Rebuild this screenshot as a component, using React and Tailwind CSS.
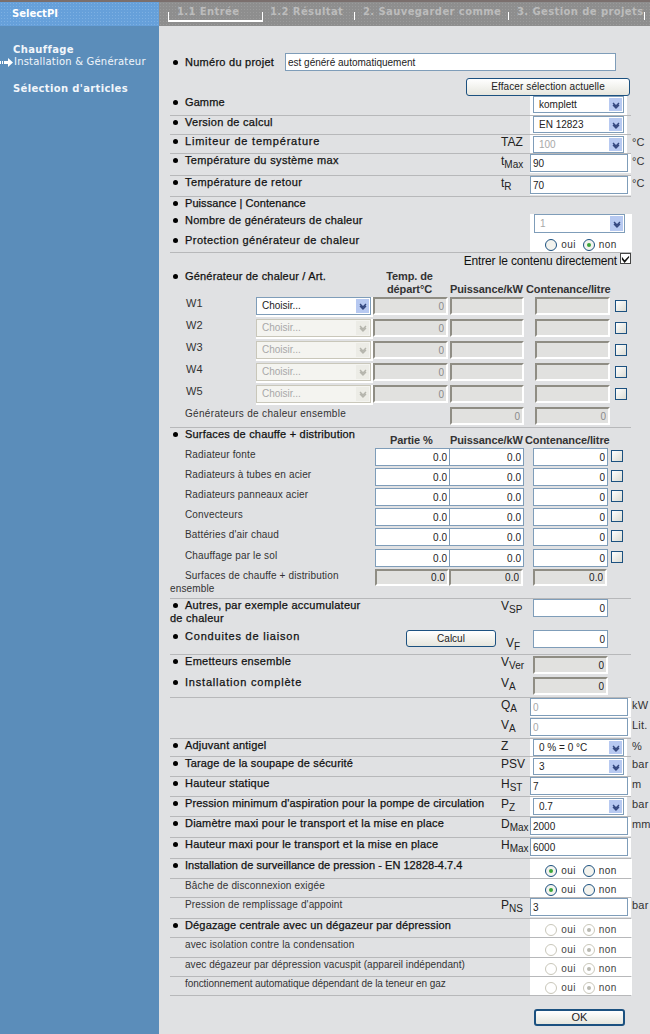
import React from "react";
import clsx from "clsx";

// shared input look
const boxBorder = "border border-[#7f9db9]";
const insetBorder = "border-2 border-t-[#8f8d84] border-l-[#8f8d84] border-r-white border-b-white bg-[#e1e1df]";

function Field({ value, className, right, off, inset, dark }) {
  return (
    <input
      defaultValue={value}
      disabled={off || inset}
      className={clsx(
        "block min-w-0 px-[2px] text-[10px] leading-none outline-none",
        right && "text-right",
        inset ? insetBorder : boxBorder + " bg-white",
        off ? "text-[#a9a9a9]" : inset && !dark ? "text-[#8b8b8b]" : "text-[#222]",
        className
      )}
    />
  );
}

function Chevron({ color }) {
  return (
    <svg viewBox="0 0 12 12" className="w-[12px] h-[12px]" fill="none">
      <path d="M3 4l3 3 3-3M3 6l3 3 3-3" stroke={color} strokeWidth="1.4" />
    </svg>
  );
}

function Select({ value, className, off, faint }) {
  return (
    <div
      role="combobox"
      className={clsx(
        "relative flex items-center pl-[5px] text-[10px] leading-none",
        off ? "border border-[#c9c7ba] bg-[#f4f4f0] text-[#a8a8a8]" : boxBorder + " bg-white",
        !off && (faint ? "text-[#a8a8a8]" : "text-[#222]"),
        className
      )}
    >
      {value}
      <span className={clsx("absolute top-[1px] bottom-[1px] right-[1px] w-[13px] flex items-center justify-center", off ? "bg-[#ecece6]" : "bg-[#b7c9f1]")}>
        <Chevron color={off ? "#b5b5ad" : "#34487f"} />
      </span>
    </div>
  );
}

function Radio({ checked, off, label }) {
  return (
    <span className="flex items-center gap-[4px]">
      <span className={clsx("w-[12px] h-[12px] rounded-full border flex items-center justify-center", off ? "border-[#c9c7ba] bg-white" : "border-[#1c5180] bg-[#f3f3ee]")}>
        {checked && <span className={clsx("w-[4px] h-[4px] rounded-full", off ? "bg-[#b9b9b0]" : "bg-[#3aa53a]")} />}
      </span>
      <span className={clsx("text-[10px] leading-[12px] tracking-[0.4px]", off ? "text-[#444]" : "text-[#333]")}>{label}</span>
    </span>
  );
}

function YesNo({ yes, off, top = "pt-[4px]" }) {
  return (
    <div className={clsx("flex justify-center gap-[7px] bg-white h-full w-[102px]", top)}>
      <Radio checked={yes} off={off} label="oui" />
      <Radio checked={!yes} off={off} label="non" />
    </div>
  );
}

function Box() {
  return <span className="block w-[12px] h-[12px] border border-[#1c5180] bg-gradient-to-br from-white to-[#dcdcd4]" />;
}

function Sym({ main, sub }) {
  return (
    <div className="text-[12px] leading-[14px] text-[#222] whitespace-nowrap">
      {main}
      {sub && <sub className="text-[10px]">{sub}</sub>}
    </div>
  );
}

function Label({ bullet, strong, t, children }) {
  return (
    <div
      className={clsx(
        "leading-[13px]",
        strong ? "text-[11px] text-[#111] [-webkit-text-stroke:0.25px_#111]" : "text-[10px] text-[#333]",
        t || (strong ? "tracking-[0.3px]" : "tracking-[0.15px]"),
        !bullet && "indent-[15px]"
      )}
    >
      {bullet && <span className="inline-block w-[5px] h-[5px] rounded-full bg-black ml-[3px] mr-[7px] align-[1px]" />}
      {children}
    </div>
  );
}

function Row({ h, line = true, label, sym, control, unit }) {
  return (
    <div className={clsx("grid grid-cols-[331px_29px_101px_19px] w-[461px] items-start", h, line && "border-b border-[#b7b8ba]")}>
      <div className="whitespace-nowrap">{label}</div>
      <div>{sym}</div>
      <div className="h-full">{control}</div>
      <div className="pl-[1px] text-[11px] leading-[14px] tracking-[0.2px] text-[#333] whitespace-nowrap">{unit}</div>
    </div>
  );
}

const pad = "bg-white w-[97px] h-full";

function SelectCell({ value, faint, top = "pt-0" }) {
  return (
    <div className={clsx(pad, "pl-[3px]", top)}>
      <Select value={value} faint={faint} className="w-[91px] h-[17px]" />
    </div>
  );
}

function InputCell({ value, off }) {
  return (
    <div className="bg-white w-[101px] pb-[1px]">
      <Field value={value} off={off} className="w-[98px] h-[18px]" />
    </div>
  );
}

const headCell = "text-[11px] leading-[13px] font-bold tracking-[-0.1px] text-[#333] whitespace-nowrap";
const generators = ["W1", "W2", "W3", "W4", "W5"];
const surfaces = [
  ["Radiateur fonte", "h-[20px]"],
  ["Radiateurs à tubes en acier", "h-[20px]"],
  ["Radiateurs panneaux acier", "h-[20px]"],
  ["Convecteurs", "h-[20px]"],
  ["Battéries d'air chaud", "h-[21px]"],
  ["Chauffage par le sol", "h-[20px]"],
];

function GeneratorRows() {
  return generators.map((name, i) => (
    <div key={name} className="grid grid-cols-[86px_117px_77px_85px_80px_12px] h-[22px] items-start">
      <div className="pl-[16px] text-[11px] leading-[12px] text-[#333]">{name}</div>
      <div className="bg-white h-[20px] pr-[2px]">
        <Select value="Choisir..." off={i > 0} className="w-[115px] h-[18px]" />
      </div>
      <Field value="0" right inset className="w-[75px] h-[18px]" />
      <Field value="" inset className="w-[74px] h-[18px]" />
      <Field value="" inset className="w-[75px] h-[18px]" />
      <div className="pt-[3px]">
        <Box />
      </div>
    </div>
  ));
}

function SurfaceRows() {
  return surfaces.map(([name, h]) => (
    <div key={name} className={clsx("grid grid-cols-[205px_74px_84px_78px_12px] items-start", h)}>
      <Label>{name}</Label>
      <Field value="0.0" right className="w-[75px] h-[18px]" />
      <Field value="0.0" right className="w-[75px] h-[18px]" />
      <Field value="0" right className="w-[75px] h-[18px]" />
      <div className="pt-[2px]">
        <Box />
      </div>
    </div>
  ));
}

function Tabs() {
  return (
    <div className="flex items-start pl-[9px] pt-[10px] h-[24px] bg-[#8e8e8e] bg-[radial-gradient(#9b9b9b_0.7px,transparent_0.7px)] bg-[length:3px_3px] font-['DejaVu_Sans',sans-serif] font-bold text-[10px] leading-[0px] tracking-[0.4px] text-[#bcbcbc] whitespace-nowrap">
      <div className="w-[95px] h-[10px] pl-[8px] border-x border-b-2 border-white">1.1 Entrée</div>
      <div className="w-[91px] h-[8px] pl-[7px]">1.2 Résultat</div>
      <div className="w-[154px] h-[8px] pl-[8px] border-l border-white">2. Sauvegarder comme</div>
      <div className="w-[137px] h-[8px] pl-[8px] border-x border-white">3. Gestion de projets</div>
    </div>
  );
}

function Sidebar() {
  return (
    <aside className="w-[159px] shrink-0 bg-[#5b8dba] font-['DejaVu_Sans',sans-serif] text-[#f2f6fa]">
      <div className="h-[24px] pl-[12px] pt-[6px] bg-[#66a0da] bg-[radial-gradient(#7db0e2_0.7px,transparent_0.7px)] bg-[length:3px_3px] text-[10px] font-bold leading-[12px] text-white">SelectPI</div>
      <div className="pl-[13px] pt-[18px] text-[10px] leading-[12px]">
        <div className="font-bold tracking-[0.35px]">Chauffage</div>
        <div className="flex items-center -ml-[13px]">
          <svg viewBox="0 0 14 9" className="w-[14px] h-[9px] shrink-0" fill="white">
            <path d="M0 3h1v3H0zM2 3h1v3H2zM4 3h4V0l5 4.5L8 9V6H4z" />
          </svg>
          <span className="tracking-[0.2px]">Installation &amp; Générateur</span>
        </div>
        <div className="font-bold tracking-[0.35px] mt-[15px]">Sélection d'articles</div>
      </div>
    </aside>
  );
}

export default function App() {
  return (
    <div className="flex w-[650px] min-h-[1034px] overflow-hidden border-t-2 border-[#7b6f6d] bg-[#e0e1e3] font-['Liberation_Sans',Arial,sans-serif]">
      <Sidebar />
      <main className="flex-1 min-w-0 flex flex-col">
        <Tabs />
        <div className="pl-[11px]">
          <div className="h-[70px] w-[461px] pt-[27px]">
            <div className="flex items-center h-[18px]">
              <div className="w-[115px]">
                <Label bullet strong t="tracking-[0.26px]">Numéro du projet</Label>
              </div>
              <Field value="est généré automatiquement" className="w-[331px] h-[18px]" />
            </div>
            <button className="block ml-[296px] mt-[7px] w-[164px] h-[18px] rounded-[3px] border border-[#1c5180] bg-gradient-to-b from-white to-[#e6e6de] text-[10px] leading-none tracking-[0.1px] text-[#222]">
              Effacer sélection actuelle
            </button>
          </div>

          <Row h="h-[20px]" label={<Label bullet strong t="tracking-[0.1px]">Gamme</Label>} control={<SelectCell value="komplett" />} />
          <Row h="h-[19px]" label={<Label bullet strong t="tracking-[0.27px]">Version de calcul</Label>} control={<SelectCell value="EN 12823" />} />
          <Row h="h-[19px]" label={<Label bullet strong t="tracking-[0.8px]">Limiteur de température</Label>} sym={<Sym main="TAZ" />} control={<SelectCell value="100" faint top="pt-[1px]" />} unit="°C" />
          <Row h="h-[22px]" label={<Label bullet strong t="tracking-[0.34px]">Température du système max</Label>} sym={<Sym main="t" sub="Max" />} control={<InputCell value="90" />} unit="°C" />
          <Row h="h-[21px]" label={<Label bullet strong t="tracking-[0.4px]">Température de retour</Label>} sym={<Sym main="t" sub="R" />} control={<InputCell value="70" />} unit="°C" />
          <Row h="h-[17px]" line={false} label={<Label bullet strong t="tracking-[0.07px]">Puissance | Contenance</Label>} />
          <Row h="h-[20px]" line={false} label={<Label bullet strong t="tracking-[0.22px]">Nombre de générateurs de chaleur</Label>} control={
            <div className="bg-white w-[102px] h-full pl-[4px]">
              <Select value="1" faint className="w-[91px] h-[19px]" />
            </div>
          } />
          <Row h="h-[19px]" label={<Label bullet strong t="tracking-[0.45px]">Protection générateur de chaleur</Label>} control={<YesNo top="pt-[3px]" />} />

          <div className="h-[17px] w-[461px] flex justify-end items-start">
            <span className="text-[12px] leading-[16px] tracking-[-0.14px] text-[#111]">Entrer le contenu directement</span>
            <span className="flex items-center justify-center w-[11px] h-[11px] ml-[3px] border border-[#444] bg-white">
              <svg viewBox="0 0 10 10" className="w-[9px] h-[9px]"><path d="M1 3l3 4 5-5v2L4 10 1 6z" fill="#111" /></svg>
            </span>
          </div>

          <div className="grid grid-cols-[203px_77px_76px_105px] w-[461px] h-[27px] items-start">
            <Label bullet strong t="tracking-[0.19px]">Générateur de chaleur / Art.</Label>
            <div className={clsx(headCell, "text-center pr-[4px]")}>Temp. de<br />départ°C</div>
            <div className={clsx(headCell, "pt-[13px]")}>Puissance/kW</div>
            <div className={clsx(headCell, "pt-[13px]")}>Contenance/litre</div>
          </div>
          <GeneratorRows />
          <div className="grid grid-cols-[280px_85px_80px] w-[461px] h-[21px] border-b border-[#b7b8ba] items-start">
            <Label t="tracking-[0.32px]">Générateurs de chaleur ensemble</Label>
            <Field value="0" right inset className="w-[74px] h-[18px]" />
            <Field value="0" right inset className="w-[75px] h-[18px]" />
          </div>

          <div className="grid grid-cols-[220px_60px_75px_106px] w-[461px] h-[20px] items-start">
            <Label bullet strong t="tracking-[0.2px]">Surfaces de chauffe + distribution</Label>
            <div className={clsx(headCell, "pt-[6px]")}>Partie %</div>
            <div className={clsx(headCell, "pt-[6px]")}>Puissance/kW</div>
            <div className={clsx(headCell, "pt-[6px]")}>Contenance/litre</div>
          </div>
          <SurfaceRows />
          <div className="grid grid-cols-[205px_74px_84px_98px] w-[461px] h-[30px] border-b border-[#b7b8ba] items-start">
            <Label>Surfaces de chauffe + distribution ensemble</Label>
            <Field value="0.0" right inset dark className="w-[74px] h-[17px]" />
            <Field value="0.0" right inset dark className="w-[74px] h-[17px]" />
            <Field value="0.0" right inset dark className="w-[74px] h-[17px]" />
          </div>

          <Row h="h-[31px]" line={false} label={<div className="w-[200px] whitespace-normal"><Label bullet strong t="tracking-[0.25px]">Autres, par exemple accumulateur de chaleur</Label></div>} sym={<Sym main="V" sub="SP" />} control={<div className="pl-[3px]"><Field value="0" right className="w-[75px] h-[18px]" /></div>} />
          <div className="grid grid-cols-[236px_95px_29px_101px] w-[461px] h-[25px] border-b border-[#b7b8ba] items-start">
            <Label bullet strong t="tracking-[0.8px]">Conduites de liaison</Label>
            <button className="w-[90px] h-[17px] rounded-[3px] border border-[#1c5180] bg-gradient-to-b from-white to-[#e6e6de] text-[10px] leading-none text-[#222]">Calcul</button>
            <div className="pl-[5px] pt-[6px]"><Sym main="V" sub="F" /></div>
            <div className="pl-[3px]"><Field value="0" right className="w-[75px] h-[18px]" /></div>
          </div>
          <Row h="h-[21px]" line={false} label={<Label bullet strong t="tracking-[0.3px]">Emetteurs ensemble</Label>} sym={<Sym main="V" sub="Ver" />} control={<div className="pl-[3px] pt-[1px]"><Field value="0" right inset dark className="w-[75px] h-[18px]" /></div>} />
          <Row h="h-[22px]" label={<Label bullet strong t="tracking-[0.8px]">Installation complète</Label>} sym={<Sym main="V" sub="A" />} control={<div className="pl-[3px] pt-[1px]"><Field value="0" right inset dark className="w-[75px] h-[18px]" /></div>} />

          <Row h="h-[20px]" line={false} sym={<Sym main="Q" sub="A" />} control={<InputCell value="0" off />} unit="kW" />
          <Row h="h-[21px]" sym={<Sym main="V" sub="A" />} control={<InputCell value="0" off />} unit="Lit." />
          <Row h="h-[18px]" label={<Label bullet strong t="tracking-[0.2px]">Adjuvant antigel</Label>} sym={<Sym main="Z" />} control={<SelectCell value="0 % = 0 °C" />} unit="%" />
          <Row h="h-[20px]" label={<Label bullet strong t="tracking-[0.17px]">Tarage de la soupape de sécurité</Label>} sym={<Sym main="PSV" />} control={<SelectCell value="3" top="pt-[1px]" />} unit="bar" />
          <Row h="h-[20px]" label={<Label bullet strong t="tracking-[0.25px]">Hauteur statique</Label>} sym={<Sym main="H" sub="ST" />} control={<InputCell value="7" />} unit="m" />
          <Row h="h-[20px]" label={<Label bullet strong t="tracking-[0.15px]">Pression minimum d'aspiration pour la pompe de circulation</Label>} sym={<Sym main="P" sub="Z" />} control={<SelectCell value="0.7" top="pt-[1px]" />} unit="bar" />
          <Row h="h-[21px]" label={<Label bullet strong t="tracking-[0.2px]">Diamètre maxi pour le transport et la mise en place</Label>} sym={<Sym main="D" sub="Max" />} control={<InputCell value="2000" />} unit="mm" />
          <Row h="h-[21px]" label={<Label bullet strong t="tracking-[0.2px]">Hauteur maxi pour le transport et la mise en place</Label>} sym={<Sym main="H" sub="Max" />} control={<InputCell value="6000" />} />
          <Row h="h-[20px]" label={<Label bullet strong t="tracking-[0.03px]">Installation de surveillance de pression - EN 12828-4.7.4</Label>} control={<YesNo yes />} />
          <Row h="h-[19px]" label={<Label>Bâche de disconnexion exigée</Label>} control={<YesNo yes />} />
          <Row h="h-[21px]" label={<Label>Pression de remplissage d'appoint</Label>} sym={<Sym main="P" sub="NS" />} control={<InputCell value="3" />} unit="bar" />
          <Row h="h-[19px]" label={<Label bullet strong t="tracking-[0.15px]">Dégazage centrale avec un dégazeur par dépression</Label>} control={<YesNo off />} />
          <Row h="h-[20px]" label={<Label>avec isolation contre la condensation</Label>} control={<YesNo off />} />
          <Row h="h-[19px]" label={<Label t="tracking-[0.05px]">avec dégazeur par dépression vacuspit (appareil indépendant)</Label>} control={<YesNo off />} />
          <Row h="h-[19px]" label={<Label t="tracking-[-0.07px]">fonctionnement automatique dépendant de la teneur en gaz</Label>} control={<YesNo off />} />

          <button className="block ml-[364px] mt-[13px] w-[91px] h-[17px] rounded-[3px] border-2 border-[#1c5180] bg-gradient-to-b from-white to-[#e6e6de] text-[11px] leading-none text-[#222]">OK</button>
        </div>
      </main>
    </div>
  );
}
